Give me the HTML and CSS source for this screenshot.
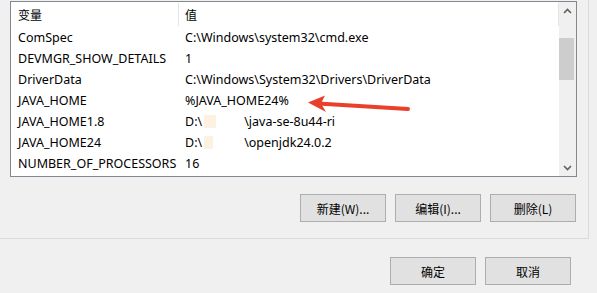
FILE: index.html
```html
<!DOCTYPE html>
<html>
<head>
<meta charset="utf-8">
<link rel="stylesheet" href="styles.css">
</head>
<body>
<div class="dialog">
  <div class="panel">
    <div class="list">
      <div class="table">
        <div class="hdr">
          <div class="c1">变量</div>
          <div class="c2">值</div>
        </div>
        <div class="row"><div class="c1">ComSpec</div><div class="c2">C:\Windows\system32\cmd.exe</div></div>
        <div class="row"><div class="c1">DEVMGR_SHOW_DETAILS</div><div class="c2">1</div></div>
        <div class="row"><div class="c1">DriverData</div><div class="c2">C:\Windows\System32\Drivers\DriverData</div></div>
        <div class="row"><div class="c1">JAVA_HOME</div><div class="c2">%JAVA_HOME24%</div></div>
        <div class="row"><div class="c1">JAVA_HOME1.8</div><div class="c2">D:\<span class="redact r1"><span class="blot b1"></span></span>\java-se-8u44-ri</div></div>
        <div class="row"><div class="c1">JAVA_HOME24</div><div class="c2">D:\<span class="redact r2"><span class="blot b2"></span></span>\openjdk24.0.2</div></div>
        <div class="row"><div class="c1">NUMBER_OF_PROCESSORS</div><div class="c2">16</div></div>
      </div>
      <div class="scrollbar">
        <div class="sb-btn">
          <svg width="9" height="6" viewBox="0 0 9 6"><path d="M1 5 L4.5 1.5 L8 5" fill="none" stroke="#606060" stroke-width="1.6"/></svg>
        </div>
        <div class="sb-track"><div class="sb-thumb"></div></div>
        <div class="sb-btn">
          <svg width="9" height="6" viewBox="0 0 9 6"><path d="M1 1 L4.5 4.5 L8 1" fill="none" stroke="#606060" stroke-width="1.6"/></svg>
        </div>
      </div>
    </div>
    <div class="btnrow">
      <button class="btn">新建(W)...</button>
      <button class="btn">编辑(I)...</button>
      <button class="btn">删除(L)</button>
    </div>
  </div>
  <div class="footer">
    <button class="btn">确定</button>
    <button class="btn">取消</button>
  </div>
  <svg class="arrow" width="597" height="293" viewBox="0 0 597 293">
    <path d="M318 103.5 L408 109" stroke="#e8402a" stroke-width="4" stroke-linecap="round" fill="none"/>
    <polygon points="308,102.5 325,95.5 321,103.5 326,112" fill="#e8402a"/>
  </svg>
</div>
</body>
</html>
```

FILE: styles.css
```css
html, body {
  margin: 0;
  padding: 0;
}
body {
  background: #f0f0f0;
  font-family: "Noto Sans", "Noto Sans CJK SC", sans-serif;
  font-size: 12.5px;
  color: #000;
}
.dialog {
  position: relative;
  width: 597px;
  height: 293px;
  overflow: hidden;
}
.panel {
  width: 588px;
  height: 238px;
  border-right: 1px solid #dadada;
  border-bottom: 1px solid #dadada;
  box-sizing: content-box;
  padding: 0;
  display: flex;
  flex-direction: column;
}
.list {
  margin: 1px 0 0 10px;
  width: 565px;
  height: 174px;
  border: 1px solid #828790;
  background: #fff;
  display: flex;
}
.table {
  width: 548px;
  display: flex;
  flex-direction: column;
}
.hdr, .row {
  display: grid;
  grid-template-columns: 168px 1fr;
}
.hdr {
  height: 25px;
  line-height: 25px;
  font-family: "Noto Sans CJK SC", sans-serif;
  font-size: 12px;
}
.hdr .c1 {
  border-right: 1px solid #e5e5e5;
  margin: 1px 0 1px 0;
  line-height: 23px;
}
.hdr .c2 {
  border-right: 1px solid #e5e5e5;
  margin: 1px 0;
  line-height: 23px;
}
.row {
  height: 21px;
  line-height: 21px;
}
.c1 {
  padding-left: 7px;
  white-space: nowrap;
}
.c2 {
  padding-left: 6px;
  white-space: nowrap;
}
.redact {
  display: inline-block;
  vertical-align: top;
  position: relative;
  height: 21px;
}
.r1 { width: 42px; }
.r2 { width: 42px; }
.blot {
  position: absolute;
  top: 4px;
  height: 13px;
  background: #fdf2e2;
}
.b1 { left: 2px; width: 12px; }
.b2 { left: 2px; width: 9px; }
.scrollbar {
  width: 17px;
  background: #f0f0f0;
  display: flex;
  flex-direction: column;
}
.sb-btn {
  height: 17px;
  display: flex;
  align-items: center;
  justify-content: center;
}
.sb-track {
  flex: 1;
  padding-top: 19px;
}
.sb-thumb {
  margin: 0 2px 0 0;
  height: 42px;
  background: #cdcdcd;
}
.btnrow {
  display: flex;
  justify-content: flex-end;
  gap: 9px;
  margin-top: 17px;
  padding-right: 12px;
}
.btn {
  width: 86px;
  height: 28px;
  background: #e1e1e1;
  border: 1px solid #adadad;
  border-radius: 0;
  font-family: "Noto Sans CJK SC", sans-serif;
  font-size: 12px;
  color: #000;
  padding: 0;
  margin: 0;
}
.footer {
  display: flex;
  justify-content: flex-end;
  gap: 9px;
  margin-top: 18px;
  padding-right: 26px;
}
.arrow {
  position: absolute;
  left: 0;
  top: 0;
  pointer-events: none;
}
```
